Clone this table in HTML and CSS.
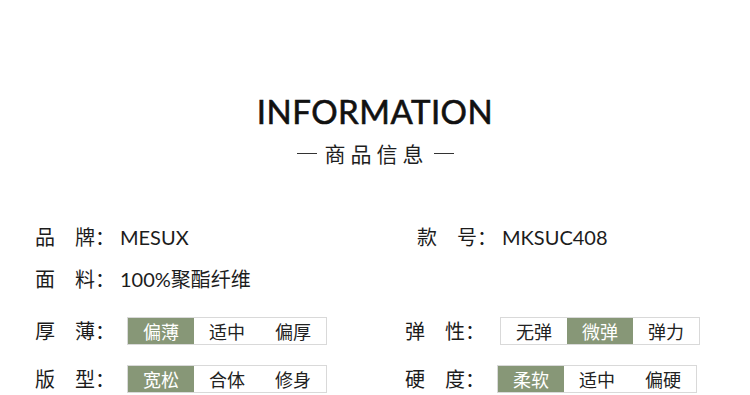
FILE: index.html
```html
<!DOCTYPE html>
<html lang="zh">
<head>
<meta charset="utf-8">
<link rel="stylesheet" href="styles.css">
</head>
<body>
<div class="page">
  <header class="head">
    <h1 class="title">INFORMATION</h1>
    <p class="sub"><span class="dash"></span><span class="sub-text">商品信息</span><span class="dash"></span></p>
  </header>
  <section class="specs">
    <div class="row row-text">
      <div class="cell"><span class="lbl">品<i class="gap"></i>牌：</span><span class="val">MESUX</span></div>
      <div class="cell"><span class="lbl">款<i class="gap"></i>号：</span><span class="val">MKSUC408</span></div>
    </div>
    <div class="row row-text">
      <div class="cell"><span class="lbl">面<i class="gap"></i>料：</span><span class="val">100%聚酯纤维</span></div>
      <div class="cell"></div>
    </div>
    <div class="row row-opt">
      <div class="cell"><span class="lbl">厚<i class="gap"></i>薄：</span>
        <div class="seg"><span class="opt on">偏薄</span><span class="opt">适中</span><span class="opt">偏厚</span></div></div>
      <div class="cell"><span class="lbl">弹<i class="gap"></i>性：</span>
        <div class="seg seg-r1"><span class="opt">无弹</span><span class="opt on">微弹</span><span class="opt">弹力</span></div></div>
    </div>
    <div class="row row-opt">
      <div class="cell"><span class="lbl">版<i class="gap"></i>型：</span>
        <div class="seg"><span class="opt on">宽松</span><span class="opt">合体</span><span class="opt">修身</span></div></div>
      <div class="cell"><span class="lbl">硬<i class="gap"></i>度：</span>
        <div class="seg"><span class="opt on">柔软</span><span class="opt">适中</span><span class="opt">偏硬</span></div></div>
    </div>
  </section>
</div>
</body>
</html>
```
FILE: styles.css
```css
* { box-sizing: border-box; }
html, body { margin: 0; padding: 0; background: #fff; }
body {
  width: 750px;
  height: 395px;
  overflow: hidden;
  font-family: "Noto Sans CJK SC", "Noto Sans", sans-serif;
  color: #1c1c1c;
}
.page { width: 750px; }
.head {
  padding-top: 92px;
  display: flex;
  flex-direction: column;
  align-items: center;
}
.title {
  margin: 0;
  font-family: "Lato", "Noto Sans", sans-serif;
  font-weight: 400;
  font-size: 33px;
  line-height: 38px;
  letter-spacing: 0.5px;
  -webkit-text-stroke: 0.6px #111;
  color: #111;
}
.sub {
  margin: 10px 0 0;
  display: flex;
  align-items: center;
  gap: 8px;
  font-size: 21px;
  line-height: 26px;
  color: #1e1e1e;
}
.sub-text { letter-spacing: 5px; margin-right: -3px; }
.dash {
  display: block;
  width: 20px;
  height: 1.5px;
  background: #333;
  margin-top: 1px;
}

.specs { margin-top: 50px; }
.row {
  display: grid;
  grid-template-columns: 382px 1fr;
  padding-left: 35px;
  align-items: center;
}
.row-text { height: 42px; }
.row-opt { grid-template-columns: 370px 1fr; height: 48px; }
.row-text + .row-opt { margin-top: 7px; }
.cell { display: flex; align-items: center; }
.lbl {
  display: flex;
  align-items: center;
  font-size: 20px;
  line-height: 28px;
  white-space: nowrap;
}
.gap { display: inline-block; width: 20px; }
.val {
  margin-left: 5px;
  font-family: "Lato", "Noto Sans CJK SC", sans-serif;
  font-size: 20px;
  line-height: 28px;
}
.seg {
  margin-left: 12px;
  display: flex;
  border: 1px solid #d9d9d9;
  height: 28px;
}
.seg-r1 { margin-left: 15px; }
.opt {
  width: 66px;
  display: flex;
  align-items: center;
  justify-content: center;
  font-size: 18px;
  color: #222;
}
.opt.on { background: #879777; color: #fff; }
```
